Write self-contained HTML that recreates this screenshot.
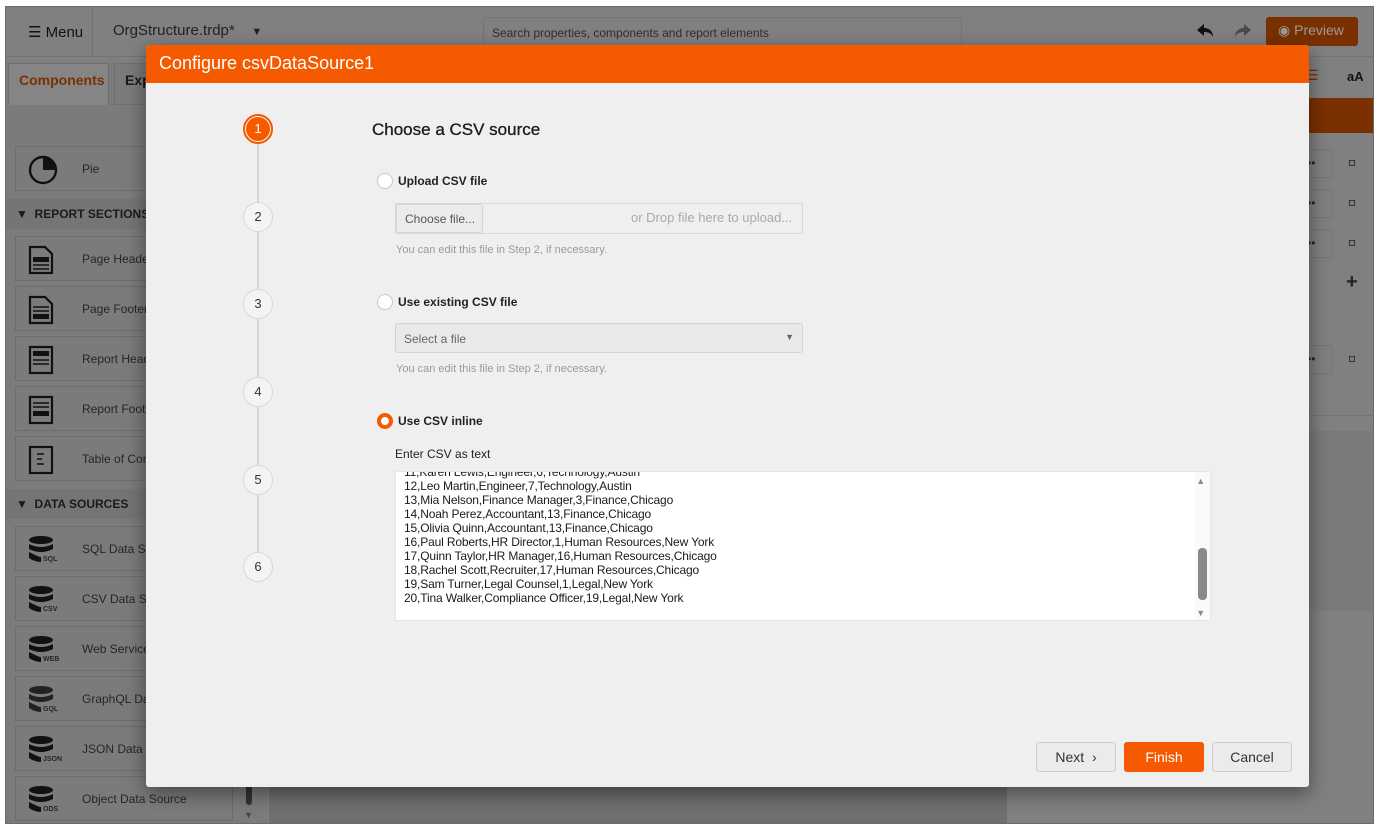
<!DOCTYPE html>
<html><head><meta charset="utf-8"><style>
*{margin:0;padding:0;box-sizing:border-box}
body{width:1379px;height:829px;background:#fff;font-family:"Liberation Sans",Arial,sans-serif;position:relative;overflow:hidden}
.a{position:absolute}
.app{left:5px;top:6px;width:1369px;height:818px;background:#808080;border:1px solid #6a6a6a;overflow:hidden}
.item{position:absolute;left:9px;width:218px;height:45px;border:1px solid #6c6c6c;font-size:12px;color:#262626}
.item span{position:absolute;left:66px;top:15px;white-space:nowrap}
.item svg{position:absolute;left:12px;top:8px}
.item b{position:absolute;left:27px;top:29px;font-size:7px;line-height:8px}
.sec{position:absolute;left:0;width:262px;height:30px;background:#757575;font-size:12px;color:#1a1a1a;font-weight:bold}
.step{position:absolute;left:243px;width:30px;height:30px;border-radius:50%;border:1px solid #d8d8d8;background:#f4f4f4;font-size:13px;color:#333;text-align:center;line-height:28px}
.radio{position:absolute;left:377px;width:16px;height:16px;border-radius:50%;border:1px solid #c8c8c8;background:#fff}
.lbl{position:absolute;left:398px;font-size:12px;color:#222;font-weight:bold}
.hint{position:absolute;left:396px;font-size:11px;color:#9a9a9a}
.btn{position:absolute;top:742px;width:80px;height:30px;border:1px solid #cfcfcf;border-radius:3px;background:#ebebeb;font-size:14px;color:#333;text-align:center;line-height:28px}
.ta div{height:14px;white-space:nowrap}
</style></head><body>
<div class="a app">
  <div class="a" style="left:0;top:0;width:1369px;height:50px;border-bottom:1px solid #747474"></div>
  <div class="a" style="left:86px;top:0;width:1px;height:50px;background:#747474"></div>
  <div class="a" style="left:22px;top:16px;font-size:15px;color:#111">&#9776; Menu</div>
  <div class="a" style="left:107px;top:15px;font-size:15px;color:#222">OrgStructure.trdp* &nbsp;&nbsp;&nbsp;<span style="font-size:11px">&#9660;</span></div>
  <div class="a" style="left:477px;top:10px;width:479px;height:30px;border:1px solid #747474;border-radius:3px;font-size:12px;color:#2e2e2e;padding:8px 8px">Search properties, components and report elements</div>
  <svg class="a" style="left:1190px;top:16px" width="18" height="16" viewBox="0 0 18 16"><path d="M8 1L1 7l7 6V9c4 0 7 1 9 5 0-5-3-9-9-9z" fill="#111"/></svg>
  <svg class="a" style="left:1228px;top:16px" width="18" height="16" viewBox="0 0 18 16"><path d="M10 1l7 6-7 6V9c-4 0-7 1-9 5 0-5 3-9 9-9z" fill="#4a4a4a"/></svg>
  <div class="a" style="left:1260px;top:10px;width:92px;height:29px;background:#7a3000;border-radius:3px;font-size:14px;color:#9a9a9a;padding:5px 0 0 12px">&#9673; Preview</div>
  <div class="a" style="left:0;top:56px;width:262px;height:760px;background:#7b7b7b"></div>
  <div class="a" style="left:2px;top:56px;width:101px;height:42px;background:#858585;border:1px solid #6f6f6f;border-bottom:none;font-size:14px;color:#7a3000;font-weight:bold;padding:8px 0 0 10px">Components</div>
  <div class="a" style="left:108px;top:56px;width:40px;height:42px;background:#7b7b7b;border:1px solid #6f6f6f;font-size:14px;color:#1a1a1a;font-weight:bold;padding:8px 0 0 10px">Expl</div>
  <div class="item" style="top:139px"><svg width="30" height="30" viewBox="0 0 30 30"><circle cx="15" cy="15" r="13" fill="none" stroke="#111" stroke-width="2.4"/><path d="M15 15V2A13 13 0 0 1 28 15Z" fill="#111"/></svg><span>Pie</span></div>
  <div class="sec" style="top:192px"><span class="a" style="left:10px;top:8px">&#9660;&nbsp; REPORT SECTIONS</span></div>
  <div class="item" style="top:229px"><svg width="26" height="30"><path d="M2 2h15l7 7v19H2z" fill="none" stroke="#111" stroke-width="2.2"/><rect x="5" y="12" width="16" height="5" fill="#111"/><path d="M5 20h16M5 24h16" stroke="#111" stroke-width="1.5"/></svg><span>Page Heade</span></div>
  <div class="item" style="top:279px"><svg width="26" height="30"><path d="M2 2h15l7 7v19H2z" fill="none" stroke="#111" stroke-width="2.2"/><path d="M5 12h16M5 16h16" stroke="#111" stroke-width="1.5"/><rect x="5" y="19" width="16" height="5" fill="#111"/></svg><span>Page Footer</span></div>
  <div class="item" style="top:329px"><svg width="26" height="30"><rect x="2" y="2" width="22" height="26" fill="none" stroke="#111" stroke-width="2.2"/><rect x="5" y="6" width="16" height="5" fill="#111"/><path d="M5 15h16M5 19h16" stroke="#111" stroke-width="1.5"/></svg><span>Report Head</span></div>
  <div class="item" style="top:379px"><svg width="26" height="30"><rect x="2" y="2" width="22" height="26" fill="none" stroke="#111" stroke-width="2.2"/><path d="M5 8h16M5 12h16" stroke="#111" stroke-width="1.5"/><rect x="5" y="16" width="16" height="5" fill="#111"/></svg><span>Report Foote</span></div>
  <div class="item" style="top:429px"><svg width="26" height="30"><rect x="2" y="2" width="22" height="26" fill="none" stroke="#111" stroke-width="2.2"/><path d="M9 9h7M9 14h5M9 19h7" stroke="#111" stroke-width="1.6"/></svg><span>Table of Con</span></div>
  <div class="sec" style="top:482px"><span class="a" style="left:10px;top:8px">&#9660;&nbsp; DATA SOURCES</span></div>
  <div class="item" style="top:519px"><svg width="28" height="30"><ellipse cx="13" cy="5" rx="12" ry="4" fill="#111"/><path d="M1 9q12 6 24 0v5q-12 6-24 0zM1 17q12 6 12 5v5q-6 0-12-4z" fill="#111"/></svg><span>SQL Data So</span><b>SQL</b></div>
  <div class="item" style="top:569px"><svg width="28" height="30"><ellipse cx="13" cy="5" rx="12" ry="4" fill="#111"/><path d="M1 9q12 6 24 0v5q-12 6-24 0zM1 17q12 6 12 5v5q-6 0-12-4z" fill="#111"/></svg><span>CSV Data So</span><b>CSV</b></div>
  <div class="item" style="top:619px"><svg width="28" height="30"><ellipse cx="13" cy="5" rx="12" ry="4" fill="#111"/><path d="M1 9q12 6 24 0v5q-12 6-24 0zM1 17q12 6 12 5v5q-6 0-12-4z" fill="#111"/></svg><span>Web Service</span><b>WEB</b></div>
  <div class="item" style="top:669px"><svg width="28" height="30"><ellipse cx="13" cy="5" rx="12" ry="4" fill="#222"/><path d="M1 9q12 6 24 0v5q-12 6-24 0zM1 17q12 6 12 5v5q-6 0-12-4z" fill="#222"/></svg><span>GraphQL Da</span><b>GQL</b></div>
  <div class="item" style="top:719px"><svg width="28" height="30"><ellipse cx="13" cy="5" rx="12" ry="4" fill="#111"/><path d="M1 9q12 6 24 0v5q-12 6-24 0zM1 17q12 6 12 5v5q-6 0-12-4z" fill="#111"/></svg><span>JSON Data S</span><b>JSON</b></div>
  <div class="item" style="top:769px"><svg width="28" height="30"><ellipse cx="13" cy="5" rx="12" ry="4" fill="#111"/><path d="M1 9q12 6 24 0v5q-12 6-24 0zM1 17q12 6 12 5v5q-6 0-12-4z" fill="#111"/></svg><span>Object Data Source</span><b>ODS</b></div>
  <div class="a" style="left:240px;top:770px;width:6px;height:28px;border-radius:3px;background:#333"></div>
  <div class="a" style="left:238px;top:803px;font-size:9px;color:#444">&#9660;</div>
  <div class="a" style="left:263px;top:100px;width:738px;height:718px;background:#6f6f6f"></div>
  <div class="a" style="left:1300px;top:60px;font-size:14px;color:#7a3000">&#9776;</div>
  <div class="a" style="left:1341px;top:62px;font-size:13px;color:#111;font-weight:bold">aA</div>
  <div class="a" style="left:1280px;top:91px;width:88px;height:35px;background:#7a3000"></div>
  <div class="a" style="left:1270px;top:142px;width:57px;height:29px;border:1px solid #767676;border-radius:3px;font-size:12px;color:#222;padding-left:30px;line-height:26px">••</div>
  <div class="a" style="left:1270px;top:182px;width:57px;height:29px;border:1px solid #767676;border-radius:3px;font-size:12px;color:#222;padding-left:30px;line-height:26px">••</div>
  <div class="a" style="left:1270px;top:222px;width:57px;height:29px;border:1px solid #767676;border-radius:3px;font-size:12px;color:#222;padding-left:30px;line-height:26px">••</div>
  <div class="a" style="left:1270px;top:338px;width:57px;height:29px;border:1px solid #767676;border-radius:3px;font-size:12px;color:#222;padding-left:30px;line-height:26px">••</div>
  <div class="a" style="left:1343px;top:153px;width:6px;height:6px;border:1px solid #333"></div>
  <div class="a" style="left:1343px;top:193px;width:6px;height:6px;border:1px solid #333"></div>
  <div class="a" style="left:1343px;top:233px;width:6px;height:6px;border:1px solid #333"></div>
  <div class="a" style="left:1343px;top:349px;width:6px;height:6px;border:1px solid #333"></div>
  <div class="a" style="left:1340px;top:264px;font-size:20px;font-weight:bold;color:#222">+</div>
  <div class="a" style="left:1013px;top:408px;width:356px;height:1px;background:#747474"></div>
  <div class="a" style="left:1013px;top:424px;width:356px;height:180px;background:#7a7a7a"></div>
</div>

<div class="a" style="left:146px;top:45px;width:1163px;height:742px;background:#efefef;border-radius:3px;box-shadow:0 6px 20px rgba(0,0,0,.45);overflow:hidden">
  <div class="a" style="left:0;top:0;width:1163px;height:38px;background:#f55a00;color:#fff;font-size:18px;padding:8px 0 0 13px">Configure csvDataSource1</div>
</div>
<div class="a" style="left:257px;top:129px;width:2px;height:438px;background:#d6d6d6"></div>
<div class="step" style="top:114px;background:#f55a00;border:2px solid #f55a00;color:#fff;box-shadow:0 0 0 1px #fff inset;line-height:26px">1</div>
<div class="step" style="top:202px">2</div>
<div class="step" style="top:289px">3</div>
<div class="step" style="top:377px">4</div>
<div class="step" style="top:465px">5</div>
<div class="step" style="top:552px">6</div>

<div class="a" style="left:372px;top:120px;font-size:17px;color:#1a1a1a;-webkit-text-stroke:0.3px #1a1a1a">Choose a CSV source</div>
<div class="radio" style="top:173px"></div><div class="lbl" style="top:174px">Upload CSV file</div>
<div class="a" style="left:395px;top:203px;width:408px;height:31px;border:1px solid #d8d8d8;background:#efefef"></div>
<div class="a" style="left:396px;top:204px;width:87px;height:29px;border:1px solid #d4d4d4;border-radius:3px;background:#ebebeb;font-size:12px;color:#555;padding:7px 0 0 8px">Choose file...</div>
<div class="a" style="left:631px;top:210px;font-size:13px;color:#aaa">or Drop file here to upload...</div>
<div class="hint" style="top:244px">You can edit this file in Step 2, if necessary.</div>
<div class="radio" style="top:294px"></div><div class="lbl" style="top:295px">Use existing CSV file</div>
<div class="a" style="left:395px;top:323px;width:408px;height:30px;border:1px solid #d4d4d4;border-radius:3px;background:#e9e9e9;font-size:12px;color:#666;padding:8px 0 0 8px">Select a file<span class="a" style="right:8px;top:8px;font-size:9px;color:#666">&#9660;</span></div>
<div class="hint" style="top:363px">You can edit this file in Step 2, if necessary.</div>
<div class="radio" style="top:413px;border:4px solid #f55a00"></div><div class="lbl" style="top:414px">Use CSV inline</div>
<div class="a" style="left:395px;top:447px;font-size:12px;color:#222">Enter CSV as text</div>
<div class="a ta" style="left:395px;top:471px;width:816px;height:150px;background:#fff;border:1px solid #e6e6e6;overflow:hidden;font-size:12px;letter-spacing:-0.15px;color:#1a1a1a;padding:0 0 0 8px;line-height:14px">
  <div style="margin-top:-7px">11,Karen Lewis,Engineer,6,Technology,Austin</div>
  <div>12,Leo Martin,Engineer,7,Technology,Austin</div>
  <div>13,Mia Nelson,Finance Manager,3,Finance,Chicago</div>
  <div>14,Noah Perez,Accountant,13,Finance,Chicago</div>
  <div>15,Olivia Quinn,Accountant,13,Finance,Chicago</div>
  <div>16,Paul Roberts,HR Director,1,Human Resources,New York</div>
  <div>17,Quinn Taylor,HR Manager,16,Human Resources,Chicago</div>
  <div>18,Rachel Scott,Recruiter,17,Human Resources,Chicago</div>
  <div>19,Sam Turner,Legal Counsel,1,Legal,New York</div>
  <div>20,Tina Walker,Compliance Officer,19,Legal,New York</div>
  <div class="a" style="right:0;top:0;width:15px;height:148px;background:#fafafa"></div>
  <div class="a" style="right:5px;top:2px;font-size:9px;color:#888">&#9650;</div>
  <div class="a" style="right:3px;top:76px;width:9px;height:52px;border-radius:4px;background:#8a8a8a"></div>
  <div class="a" style="right:5px;top:134px;font-size:9px;color:#888">&#9660;</div>
</div>

<div class="btn" style="left:1036px">Next &nbsp;&#8250;</div>
<div class="btn" style="left:1124px;background:#f55a00;border-color:#f55a00;color:#fff">Finish</div>
<div class="btn" style="left:1212px">Cancel</div>
</body></html>
